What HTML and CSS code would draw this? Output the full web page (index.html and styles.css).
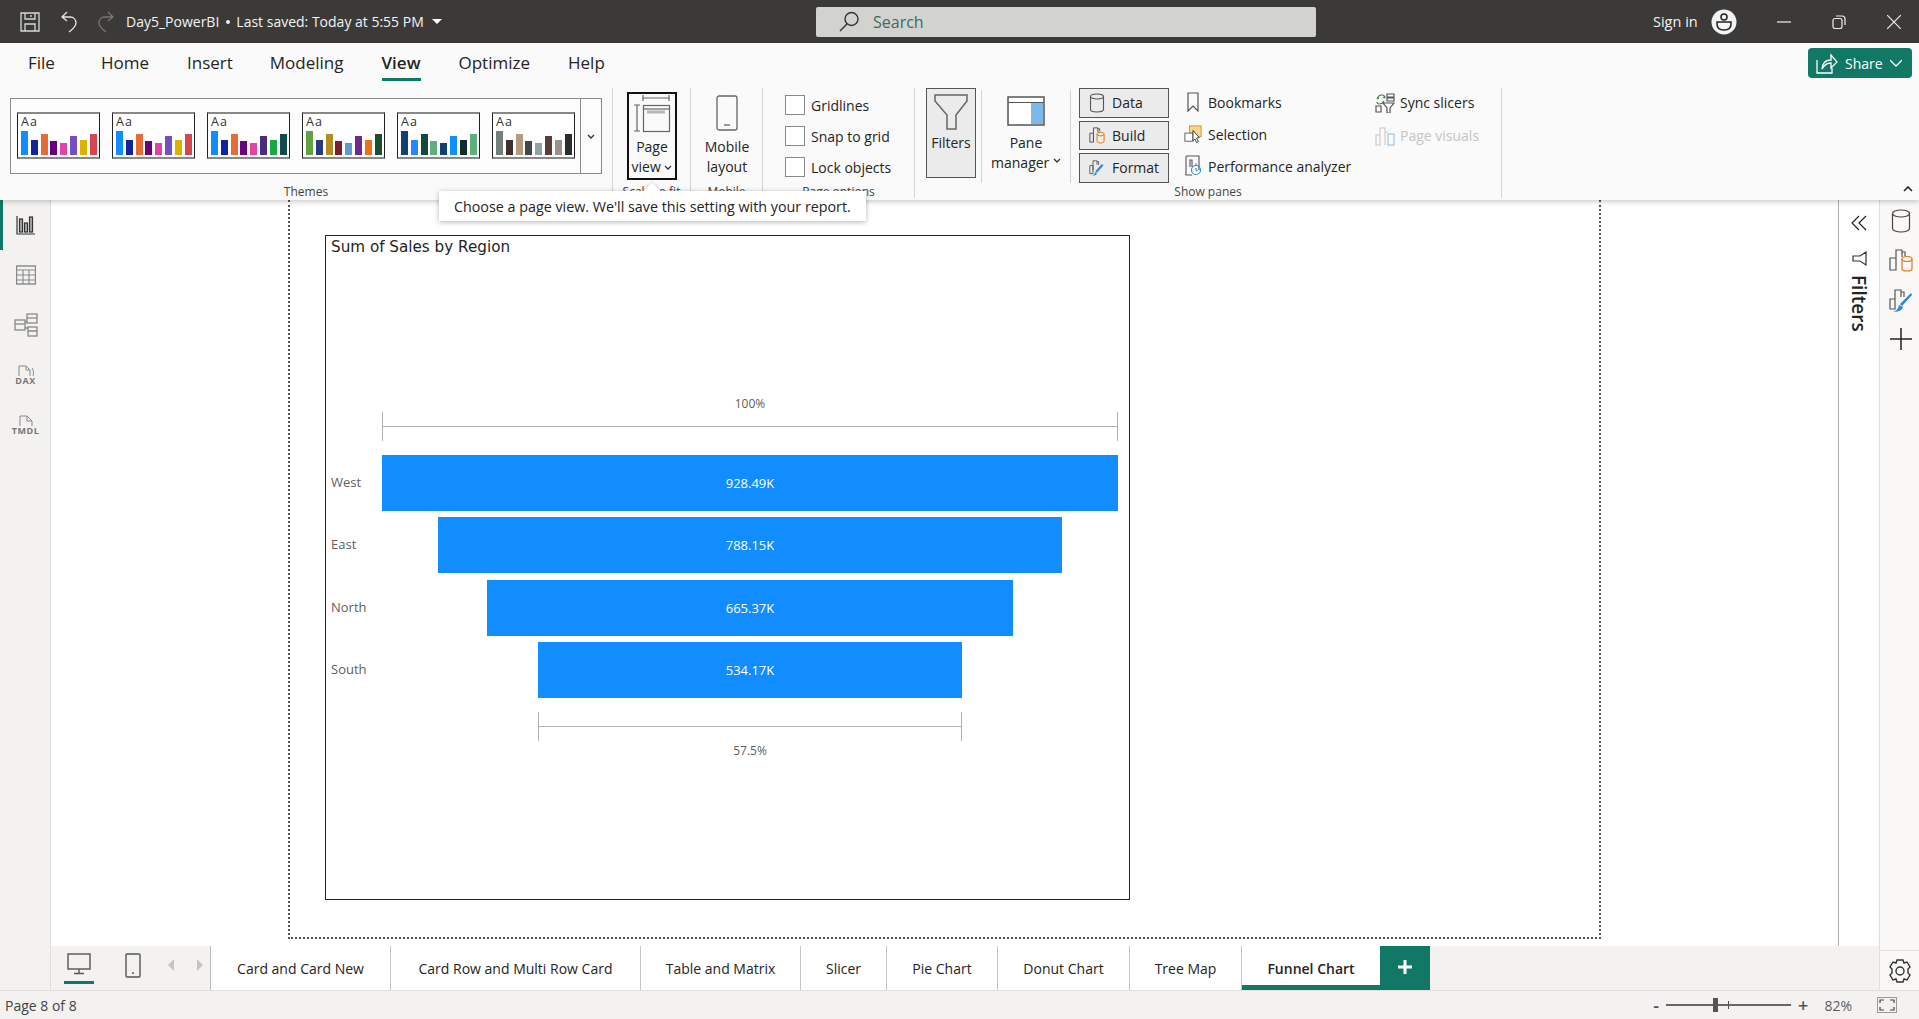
FILE: index.html
```html
<!DOCTYPE html>
<html lang="en">
<head>
    <meta charset="UTF-8">
    <meta name="viewport" content="width=device-width, initial-scale=1.0">
    <title>Day5_PowerBI</title>
    <link rel="stylesheet" href="styles.css">
</head>
<body>
    <header class="titlebar">
        <div class="quick">
            <svg class="save-icon" width="20" height="20" viewBox="0 0 20 20" fill="none" stroke="#d8d8d8" stroke-width="1.3"><path d="M1 1h18v18H1zM5 1v6h10V1M5 19v-7h10v7M11 3v2"/></svg>
            <svg class="undo-icon" width="18" height="22" viewBox="0 0 18 22" fill="none" stroke="#e6e6e6" stroke-width="1.3"><path d="M7 1 2 6l5 4M2 6h8c4 0 6 3 6 6 0 3-3 6-7 9"/></svg>
            <svg class="redo-icon" width="18" height="22" viewBox="0 0 18 22" fill="none" stroke="#777" stroke-width="1.3"><path d="m11 1 5 5-5 4M16 6H8c-4 0-6 3-6 6 0 3 3 6 7 9"/></svg>
            <span class="doc-name">Day5_PowerBI</span>
            <span class="doc-dot"></span>
            <span class="doc-saved">Last saved: Today at 5:55 PM</span>
            <span class="doc-caret"></span>
        </div>
        <div class="search">
            <svg width="22" height="22" viewBox="0 0 22 22" fill="none" stroke="#333" stroke-width="1.4"><circle cx="13.5" cy="8" r="6.5"/><path d="M9 13 2 20"/></svg>
            <span>Search</span>
        </div>
        <div class="account">
            <span class="sign-in">Sign in</span>
            <svg class="avatar" width="26" height="26" viewBox="0 0 26 26"><circle cx="13" cy="13" r="12.5" fill="#f4f4f4"/><circle cx="13" cy="8" r="3" fill="none" stroke="#222" stroke-width="1.5"/><path d="M6 13h14v2c0 4-3 6-7 6s-7-2-7-6z" fill="none" stroke="#222" stroke-width="1.5"/></svg>
            <div class="win-btns">
                <svg width="14" height="14" viewBox="0 0 14 14" stroke="#eee" stroke-width="1.2"><path d="M0 7h14"/></svg>
                <svg width="14" height="14" viewBox="0 0 14 14" fill="none" stroke="#eee" stroke-width="1.2"><rect x="1" y="3.500" width="9" height="10" rx="2"/><path d="M4 1h6c2 0 3 1 3 3v6"/></svg>
                <svg width="14" height="14" viewBox="0 0 14 14" stroke="#eee" stroke-width="1.2"><path d="m0 0 14 14M14 0 0 14"/></svg>
            </div>
        </div>
    </header>

    <section class="ribbon">
        <nav class="ribbon-tabs">
            <a class="rtab rtab-file">File</a>
            <a class="rtab rtab-home">Home</a>
            <a class="rtab rtab-insert">Insert</a>
            <a class="rtab rtab-modeling">Modeling</a>
            <a class="rtab rtab-view active">View</a>
            <a class="rtab rtab-optimize">Optimize</a>
            <a class="rtab rtab-help">Help</a>
            <button class="share">
                <svg width="22" height="22" viewBox="0 0 22 22" fill="none" stroke="#fff" stroke-width="1.3"><path d="M1 8v13h15v-5M6 17c0-5 3-9 9-9V3l6 7-6 6v-5c-4 0-7 2-9 6z"/></svg>
                <span>Share</span>
                <svg width="12" height="8" viewBox="0 0 12 8" fill="none" stroke="#fff" stroke-width="1.3"><path d="m0 1 6 6 6-6"/></svg>
            </button>
        </nav>

        <div class="ribbon-body">
            <div class="group group-themes">
                <div class="group-main">
                    <div class="gallery">
                        <div class="gallery-items">
                            <div class="theme"><span class="aa">Aa</span><div class="bars"><i style="background:#118dff"></i><i style="background:#12239e"></i><i style="background:#e66c37"></i><i style="background:#6b007b"></i><i style="background:#e044a7"></i><i style="background:#744ec2"></i><i style="background:#d9b300"></i><i style="background:#d64550"></i></div></div>
                            <div class="theme"><span class="aa">Aa</span><div class="bars"><i style="background:#118dff"></i><i style="background:#12239e"></i><i style="background:#e66c37"></i><i style="background:#6b007b"></i><i style="background:#e044a7"></i><i style="background:#744ec2"></i><i style="background:#d9b300"></i><i style="background:#d64550"></i></div></div>
                            <div class="theme"><span class="aa">Aa</span><div class="bars"><i style="background:#118dff"></i><i style="background:#12239e"></i><i style="background:#e66c37"></i><i style="background:#6b007b"></i><i style="background:#e044a7"></i><i style="background:#4b2d7f"></i><i style="background:#1aab40"></i><i style="background:#0f4c4a"></i></div></div>
                            <div class="theme"><span class="aa">Aa</span><div class="bars"><i style="background:#63a33f"></i><i style="background:#2b3a7b"></i><i style="background:#af8e26"></i><i style="background:#7a1f2b"></i><i style="background:#5e9bd1"></i><i style="background:#6b2a8c"></i><i style="background:#e8731a"></i><i style="background:#1c4d30"></i></div></div>
                            <div class="theme"><span class="aa">Aa</span><div class="bars"><i style="background:#134074"></i><i style="background:#2886ff"></i><i style="background:#134a3f"></i><i style="background:#5fae7b"></i><i style="background:#134074"></i><i style="background:#118dff"></i><i style="background:#0f2e2b"></i><i style="background:#5fae7b"></i></div></div>
                            <div class="theme"><span class="aa">Aa</span><div class="bars"><i style="background:#72807c"></i><i style="background:#3e2f2f"></i><i style="background:#b59a80"></i><i style="background:#40484a"></i><i style="background:#8fa3a3"></i><i style="background:#593e38"></i><i style="background:#9b938a"></i><i style="background:#2a2e2e"></i></div></div>
                        </div>
                        <div class="gallery-more"><svg width="8" height="5" viewBox="0 0 8 5" fill="none" stroke="#333" stroke-width="1.4"><path d="m1 1 3 3 3-3"/></svg></div>
                    </div>
                </div>
                <div class="group-label">Themes</div>
            </div>

            <div class="group group-scale">
                <div class="group-main">
                    <div class="big-btn page-view">
                        <svg width="40" height="40" viewBox="0 0 40 40" fill="none" stroke="#666" stroke-width="1.2"><path d="M11 1h26M11-2v6M37-2v6" transform="translate(0 2)"/><path d="M2 10h6M5 10v26M2 36h6"/><rect x="11.500" y="10.500" width="26" height="26"/><path d="M12 14h25"/><rect x="15" y="15.500" width="18" height="3" fill="#b5b5b5" stroke="none"/></svg>
                        <span>Page</span>
                        <span>view <svg class="chev" width="8" height="5" viewBox="0 0 8 5" fill="none" stroke="#333" stroke-width="1.3"><path d="m1 1 3 3 3-3"/></svg></span>
                    </div>
                </div>
                <div class="group-label">Scale to fit</div>
            </div>

            <div class="group group-mobile">
                <div class="group-main">
                    <div class="big-btn mobile-btn">
                        <svg width="22" height="36" viewBox="0 0 22 36" fill="none" stroke="#666" stroke-width="1.3"><rect x="1" y="1" width="20" height="34" rx="2"/><path d="M8 30h6"/></svg>
                        <span>Mobile</span>
                        <span>layout</span>
                    </div>
                </div>
                <div class="group-label">Mobile</div>
            </div>

            <div class="group group-options">
                <div class="group-main">
                    <div class="check-list">
                        <label class="check"><span class="box"></span>Gridlines</label>
                        <label class="check"><span class="box"></span>Snap to grid</label>
                        <label class="check"><span class="box"></span>Lock objects</label>
                    </div>
                </div>
                <div class="group-label">Page options</div>
            </div>

            <div class="group group-panes">
                <div class="group-main">
                    <div class="big-btn filters-btn">
                        <svg width="36" height="38" viewBox="0 0 36 38" fill="none" stroke="#666" stroke-width="1.5"><path d="M2 2h32v6L23 22v14h-9V22L2 8z"/></svg>
                        <span>Filters</span>
                    </div>
                    <div class="pane-sep"></div>
                    <div class="big-btn pane-btn">
                        <svg width="38" height="30" viewBox="0 0 38 30" fill="none"><rect x="1" y="1" width="36" height="28" fill="#fff" stroke="#555" stroke-width="1.500"/><rect x="24" y="7" width="12" height="21" fill="#7db8e8"/><path d="M1 6.500h36" stroke="#555" stroke-width="1.200"/></svg>
                        <span>Pane</span>
                        <span>manager <svg class="chev" width="8" height="5" viewBox="0 0 8 5" fill="none" stroke="#333" stroke-width="1.3"><path d="m1 1 3 3 3-3"/></svg></span>
                    </div>
                    <div class="pane-sep"></div>
                    <div class="pane-col pane-toggles">
                        <div class="toggle">
                            <svg width="16" height="20" viewBox="0 0 16 20" fill="none" stroke="#555" stroke-width="1.1"><ellipse cx="8" cy="3.500" rx="6.500" ry="2.500"/><path d="M1.500 3.500v13c0 1.500 3 2.500 6.500 2.500s6.500-1 6.500-2.500v-13"/></svg>
                            <span>Data</span>
                        </div>
                        <div class="toggle">
                            <svg width="18" height="20" viewBox="0 0 18 20" fill="none" stroke="#555" stroke-width="1.1"><path d="M1 8h4v10H1zM5 18V2h5v5M10 3h2v3"/><ellipse cx="13" cy="9" rx="4" ry="2" stroke="#e07b1a"/><path d="M9 9v8c0 1 2 2 4 2s4-1 4-2V9" stroke="#e07b1a"/></svg>
                            <span>Build</span>
                        </div>
                        <div class="toggle">
                            <svg width="20" height="22" viewBox="0 0 20 22" fill="none" stroke="#555" stroke-width="1.1"><path d="M1 8h4v10H1zM5 14V2h5v5M10 3h2v4"/><path d="m8 15 8-9 2 2-8 9z" fill="#2b88d8" stroke="none"/><path d="M4 20c2 0 3-1 4-4l2 2c-1 2-3 3-6 2z" fill="#2b88d8" stroke="none"/></svg>
                            <span>Format</span>
                        </div>
                    </div>
                    <div class="pane-col pane-links">
                        <div class="link-row">
                            <svg width="18" height="20" viewBox="0 0 18 20" fill="none" stroke="#555" stroke-width="1.2"><path d="M4 1h10v18l-5-5-5 5z"/></svg>
                            <span>Bookmarks</span>
                        </div>
                        <div class="link-row">
                            <svg width="18" height="20" viewBox="0 0 20 20" fill="none"><rect x="6" y="1" width="13" height="12" fill="#f7d58e" stroke="#d88b2b"/><rect x="1" y="9" width="9" height="9" fill="#fff" stroke="#555"/><path d="m10 6 7 8-3 .5 2 4-2 1-2-4-2 2z" fill="#fff" stroke="#333"/></svg>
                            <span>Selection</span>
                        </div>
                        <div class="link-row">
                            <svg width="18" height="22" viewBox="0 0 18 22" fill="none" stroke="#555" stroke-width="1.1"><path d="M2 1h13v14M2 1v19h6M6 12V5h2v7"/><circle cx="12" cy="15" r="4.500" stroke="#2b88d8"/><path d="M12 13v2l1.500 1M11 9h2" stroke="#2b88d8"/></svg>
                            <span>Performance analyzer</span>
                        </div>
                    </div>
                    <div class="pane-col pane-extra">
                        <div class="link-row">
                            <svg width="20" height="20" viewBox="0 0 20 20" fill="none" stroke-width="1.2"><path d="M2 6c1-3 3-4 5-4s3 1 3 3M10 5l-2-1M2 6l2-1M9 8c-1 2-3 3-5 3-1 0-2-1-2-2" stroke="#2e8b3f"/><path d="M12 1h7v3h-7zM12 5h7v3h-7zM1 13h5v6H1zM8 10h11l-4 5v5h-3v-5z" stroke="#555"/></svg>
                            <span>Sync slicers</span>
                        </div>
                        <div class="link-row disabled">
                            <svg width="20" height="20" viewBox="0 0 20 20" fill="none" stroke="#c8c8c8" stroke-width="1.1"><path d="M1 9h4v10H1zM5 19V2h5v17M10 6h3"/><rect x="13" y="8" width="6" height="11" stroke="#8fc1ea"/></svg>
                            <span>Page visuals</span>
                        </div>
                    </div>
                </div>
                <div class="group-label">Show panes</div>
            </div>
        </div>

        <svg class="ribbon-collapse" width="10" height="6" viewBox="0 0 10 6" fill="none" stroke="#222" stroke-width="1.6"><path d="m1 5 4-4 4 4"/></svg>
        <div class="tooltip">Choose a page view. We'll save this setting with your report.</div>
    </section>

    <main class="workspace">
        <aside class="sidebar">
            <div class="side-item active">
                <svg width="20" height="20" viewBox="0 0 20 20" fill="none" stroke="#333" stroke-width="1.2"><path d="M1 1v18h18"/><rect x="3.500" y="4" width="3" height="13" fill="#aaa"/><rect x="8.500" y="8" width="3" height="9" fill="#aaa"/><rect x="13.500" y="2" width="3" height="15" fill="#aaa"/></svg>
            </div>
            <div class="side-item">
                <svg width="20" height="20" viewBox="0 0 20 20" fill="none" stroke="#888" stroke-width="1.1"><rect x=".5" y="1" width="19" height="18" stroke-width="1.4"/><path d="M.5 5h19M.5 10h19M.5 15h19M7 5v14M13 5v14"/></svg>
            </div>
            <div class="side-item">
                <svg width="24" height="24" viewBox="0 0 24 24" fill="none" stroke="#888" stroke-width="1.3"><rect x="1" y="7" width="10" height="10"/><path d="M1 11h10"/><rect x="13" y="1" width="10" height="9"/><path d="M13 5h10"/><rect x="14" y="14" width="9" height="9"/><path d="M14 18h9M11 9h2M11 15h3"/></svg>
            </div>
            <div class="side-item file-item">
                <svg width="20" height="16" viewBox="0 0 20 16" fill="none" stroke="#888" stroke-width="1"><path d="M3 12V1h7l4 4v9M10 1v4h4M16 3c2 3 2 7 0 11"/></svg>
                <span>DAX</span>
            </div>
            <div class="side-item file-item">
                <svg width="20" height="16" viewBox="0 0 20 16" fill="none" stroke="#888" stroke-width="1"><path d="M4 12V1h7l5 5v6M11 1v5h5"/></svg>
                <span>TMDL</span>
            </div>
        </aside>

        <div class="center">
            <div class="canvas-row">
                <div class="canvas">
                    <div class="page">
                        <div class="visual">
                            <div class="visual-title">Sum of Sales by Region</div>
                            <div class="funnel">
                                <div class="pct-label">100%</div>
                                <div class="bracket-row"><div class="bracket" style="width:100%"></div></div>
                                <div class="funnel-rows">
                                    <div class="funnel-row"><span class="cat">West</span><div class="track"><div class="bar" style="width:100%">928.49K</div></div></div>
                                    <div class="funnel-row"><span class="cat">East</span><div class="track"><div class="bar" style="width:84.8%">788.15K</div></div></div>
                                    <div class="funnel-row"><span class="cat">North</span><div class="track"><div class="bar" style="width:71.6%">665.37K</div></div></div>
                                    <div class="funnel-row"><span class="cat">South</span><div class="track"><div class="bar" style="width:57.6%">534.17K</div></div></div>
                                </div>
                                <div class="bracket-row bottom"><div class="bracket" style="width:57.6%"></div></div>
                                <div class="pct-label">57.5%</div>
                            </div>
                        </div>
                    </div>
                </div>
                <div class="filters-pane">
                    <svg class="pane-chevrons" width="16" height="16" viewBox="0 0 16 16" fill="none" stroke="#222" stroke-width="1.2"><path d="M8 1 1 8l7 7M15 1 8 8l7 7"/></svg>
                    <svg class="pane-funnel" width="15" height="15" viewBox="0 0 15 15" fill="none" stroke="#333" stroke-width="1.2"><path d="M14 1v13l-6-4H1V5h7z"/></svg>
                    <span class="filters-text">Filters</span>
                </div>
            </div>
            <div class="tabstrip">
                <div class="devices">
                    <div class="device active">
                        <svg width="24" height="22" viewBox="0 0 24 22" fill="none" stroke="#555" stroke-width="1.4"><rect x="1" y="1" width="22" height="15"/><path d="M12 16v4M7 20.500h10"/></svg>
                    </div>
                    <div class="device">
                        <svg width="16" height="25" viewBox="0 0 16 25" fill="none" stroke="#555" stroke-width="1.4"><rect x="1" y="1" width="14" height="23" rx="1"/><path d="M7 20h2"/></svg>
                    </div>
                    <svg class="arrow" width="7" height="12" viewBox="0 0 7 12" fill="#c4c4c4"><path d="M6 0v12L0 6z"/></svg>
                    <svg class="arrow" width="7" height="12" viewBox="0 0 7 12" fill="#c4c4c4"><path d="M1 0v12l6-6z"/></svg>
                </div>
                <div class="tab tab-card">Card and Card New</div>
                <div class="tab tab-multi">Card Row and Multi Row Card</div>
                <div class="tab tab-table">Table and Matrix</div>
                <div class="tab tab-slicer">Slicer</div>
                <div class="tab tab-pie">Pie Chart</div>
                <div class="tab tab-donut">Donut Chart</div>
                <div class="tab tab-tree">Tree Map</div>
                <div class="tab tab-funnel active">Funnel Chart</div>
                <div class="tab-add">
                    <svg width="16" height="16" viewBox="0 0 16 16" stroke="#fff" stroke-width="3"><path d="M8 1v14M1 8h14"/></svg>
                </div>
            </div>
        </div>

        <aside class="rail">
            <div class="rail-top">
                <svg width="20" height="24" viewBox="0 0 20 24" fill="none" stroke="#444" stroke-width="1.2"><ellipse cx="10" cy="4.500" rx="8.500" ry="3.500"/><path d="M1.500 4.500v15c0 2 4 3.500 8.500 3.500s8.500-1.500 8.500-3.500v-15"/></svg>
                <svg width="24" height="24" viewBox="0 0 24 24" fill="none" stroke="#555" stroke-width="1.2"><path d="M1 10h6v12H1zM7 22V2h6v7M13 4h3v4"/><ellipse cx="18" cy="11" rx="5" ry="2.500" stroke="#e07b1a"/><path d="M13 11v10c0 1 2 2 5 2s5-1 5-2V11" stroke="#e07b1a"/></svg>
                <svg width="24" height="26" viewBox="0 0 24 26" fill="none" stroke="#555" stroke-width="1.2"><path d="M1 12h5v10H1zM6 17V3h6v7M12 5h3v5"/><path d="m11 17 11-11 1 2-10 11z" fill="#2b88d8" stroke="none"/><path d="M4 24c3 0 5-1 6-6l4 2c-1 3-5 6-10 4z" fill="#2b88d8" stroke="none"/></svg>
                <svg width="22" height="22" viewBox="0 0 22 22" stroke="#222" stroke-width="1.5"><path d="M11 0v22M0 11h22"/></svg>
            </div>
            <div class="rail-bottom">
                <svg width="26" height="26" viewBox="0 0 26 26" fill="none" stroke="#333" stroke-width="1.400"><circle cx="13" cy="13" r="4"/><path d="M10 2h6l1 3 3-1 3 5-2 2v4l2 2-3 5-3-1-1 3h-6l-1-3-3 1-3-5 2-2v-4L3 9l3-5 3 1z"/></svg>
            </div>
        </aside>
    </main>

    <footer class="statusbar">
        <span class="page-count">Page 8 of 8</span>
        <div class="zoom">
            <span class="zoom-sign minus">-</span>
            <div class="zoom-track"><span class="zoom-thumb"></span><span class="zoom-tick"></span></div>
            <span class="zoom-sign plus">+</span>
            <span class="zoom-value">82%</span>
            <svg class="fit-icon" width="20" height="16" viewBox="0 0 20 16" fill="none"><rect x=".5" y=".5" width="19" height="15" stroke="#999"/><path d="M3 6V3h4M13 3h4v3M17 10v3h-4M7 13H3v-3" stroke="#444" stroke-width="1.200"/></svg>
        </div>
    </footer>
</body>
</html>
```

FILE: styles.css
```css
* {
    box-sizing: border-box;
}

html,
body {
    margin: 0;
    height: 100%;
}

body {
    display: flex;
    flex-direction: column;
    height: 1019px;
    overflow: hidden;
    font-family: "Open Sans", "Noto Sans", sans-serif;
    font-size: 14px;
    color: #252423;
    background: #fff;
}

svg {
    display: block;
    flex: none;
}

/* title bar */
.titlebar {
    display: flex;
    align-items: center;
    height: 43px;
    flex: none;
    padding-left: 20px;
    background: #3b3a39;
    color: #f3f3f3;
}

.quick {
    display: flex;
    align-items: center;
    width: 796px;
}

.undo-icon {
    margin-left: 20px;
}

.redo-icon {
    margin-left: 19px;
}

.doc-name {
    margin-left: 11px;
}

.doc-dot {
    width: 4px;
    height: 4px;
    margin: 0 6px 0 7px;
    border-radius: 50%;
    background: #eee;
}

.doc-caret {
    margin-left: 8px;
    border-left: 5px solid transparent;
    border-right: 5px solid transparent;
    border-top: 5px solid #fff;
}

.search {
    display: flex;
    align-items: center;
    gap: 13px;
    width: 500px;
    height: 30px;
    padding-left: 22px;
    border-radius: 2px;
    background: #d2d2cf;
    color: #3f6a62;
    font-size: 16px;
}

.account {
    display: flex;
    align-items: center;
    margin-left: 337px;
}

.sign-in {
    font-size: 14.5px;
}

.avatar {
    margin-left: 13px;
}

.win-btns {
    display: flex;
    gap: 41px;
    margin-left: 40px;
}

/* ribbon */
.ribbon {
    position: relative;
    z-index: 3;
    flex: none;
    height: 157px;
    background: #fafafa;
    box-shadow: 0 2px 5px rgba(0, 0, 0, 0.2);
}

.ribbon-tabs {
    display: flex;
    height: 45px;
    padding-right: 7px;
}

.rtab {
    height: 38px;
    padding-top: 8px;
    font-size: 17px;
}

.rtab-file {
    margin-left: 28px;
}

.rtab-home {
    margin-left: 46px;
}

.rtab-insert {
    margin-left: 38px;
}

.rtab-modeling {
    margin-left: 37px;
}

.rtab-view {
    margin-left: 38px;
}

.rtab-optimize {
    margin-left: 38px;
}

.rtab-help {
    margin-left: 38px;
}

.rtab.active {
    font-weight: 600;
    border-bottom: 3px solid #117865;
}

.share {
    display: flex;
    align-items: center;
    gap: 7px;
    margin: 5px 0 0 auto;
    width: 104px;
    height: 30px;
    padding: 0 0 0 8px;
    border: 0;
    border-radius: 4px;
    background: #117865;
    color: #fff;
    font: inherit;
}

.ribbon-body {
    display: flex;
    height: 110px;
}

.group {
    display: flex;
    flex-direction: column;
    flex: none;
    border-right: 1px solid #d4d4d4;
}

.group-main {
    display: flex;
    flex: 1;
    min-height: 0;
}

.group-label {
    height: 16px;
    margin-bottom: -2px;
    font-size: 12px;
    line-height: 16px;
    text-align: center;
    color: #444;
}

.group-themes {
    width: 613px;
    padding: 10px 10px 0;
}

.group-scale {
    width: 78px;
}

.group-mobile {
    width: 72px;
}

.group-options {
    width: 152px;
}

.group-panes {
    width: 587px;
}

/* theme gallery */
.gallery {
    display: flex;
    width: 592px;
    height: 76px;
    border: 1px solid #8a8a8a;
    background: #fcfcfc;
}

.gallery-items {
    display: flex;
    gap: 12px;
    flex: 1;
    padding: 13px 0 0 6px;
    border-right: 1px solid #8a8a8a;
}

.gallery-more {
    display: flex;
    align-items: center;
    justify-content: center;
    width: 20px;
}

.theme {
    position: relative;
    display: flex;
    flex-direction: column;
    width: 83px;
    height: 47px;
    padding: 0 3px;
    border: 1px solid #222;
    border-top: 2px solid #888;
    border-bottom: 2px solid #888;
    background: #fff;
}

.aa {
    font-size: 12.5px;
    line-height: 15px;
    letter-spacing: 1.2px;
    height: 13px;
    color: #333;
}

.bars {
    position: absolute;
    left: 3px;
    bottom: 2px;
    display: flex;
    align-items: flex-end;
    gap: 2.800px;
    height: 25px;
}

.bars i {
    display: block;
    width: 7px;
}

.bars i:nth-child(1) { height: 24px; }
.bars i:nth-child(2) { height: 15px; }
.bars i:nth-child(3) { height: 21px; }
.bars i:nth-child(4) { height: 14px; }
.bars i:nth-child(5) { height: 12px; }
.bars i:nth-child(6) { height: 19px; }
.bars i:nth-child(7) { height: 15px; }
.bars i:nth-child(8) { height: 21px; }

/* ribbon buttons */
.big-btn {
    display: flex;
    flex-direction: column;
    align-items: center;
    line-height: 20px;
}

.chev {
    display: inline-block;
    vertical-align: middle;
}

.page-view {
    width: 50px;
    height: 88px;
    margin: 4px 0 0 14px;
    padding-top: 1px;
    border: 2.500px solid #111;
}

.page-view svg:first-child {
    margin-bottom: 2px;
}

.mobile-btn {
    width: 72px;
    margin-left: 1px;
    padding-top: 7px;
}

.mobile-btn svg:first-child {
    margin-bottom: 6px;
}

.check-list {
    display: flex;
    flex-direction: column;
    gap: 11px;
    padding: 7px 0 0 22px;
}

.check {
    display: flex;
    align-items: center;
    gap: 6px;
}

.box {
    width: 20px;
    height: 20px;
    border: 1px solid #8a8a8a;
    background: #fff;
}

.filters-btn {
    width: 50px;
    height: 90px;
    margin-left: 11px;
    padding-top: 4px;
    border: 1px solid #555;
    background: #ebebeb;
}

.filters-btn svg:first-child {
    margin-bottom: 2px;
}

.pane-sep {
    width: 1px;
    height: 93px;
    margin-top: 2px;
    background: #d4d4d4;
}

.filters-btn + .pane-sep {
    margin-left: 5px;
}

.pane-btn {
    width: 88px;
    padding-top: 8px;
}

.pane-btn svg:first-child {
    margin-bottom: 7px;
}

.pane-col {
    display: flex;
    flex-direction: column;
}

.pane-toggles {
    gap: 3px;
    width: 90px;
    margin-left: 8px;
}

.toggle {
    display: flex;
    align-items: center;
    gap: 7px;
    height: 29.500px;
    padding-left: 9px;
    border: 1px solid #555;
    background: #ebebeb;
}

.toggle svg {
    width: 16px;
}

.pane-links {
    width: 189px;
    margin-left: 15px;
}

.pane-extra {
    width: 118px;
    margin-left: 2px;
}

.link-row {
    display: flex;
    align-items: center;
    gap: 5px;
    height: 29px;
    margin-bottom: 4px;
}

.link-row.disabled {
    color: #c4c4c4;
}

.pane-links .link-row {
    gap: 6px;
}

.ribbon-collapse {
    position: absolute;
    right: 6px;
    top: 143px;
}

.tooltip {
    position: absolute;
    left: 439px;
    top: 148px;
    width: 427px;
    height: 30px;
    padding-left: 15px;
    font-size: 14.3px;
    line-height: 32px;
    background: #fff;
    box-shadow: 0 1px 5px rgba(0, 0, 0, 0.3);
    white-space: nowrap;
}

.tooltip::before {
    content: "";
    position: absolute;
    left: 207px;
    top: -6px;
    width: 12px;
    height: 12px;
    background: #fff;
    transform: rotate(45deg);
    box-shadow: -1px -1px 2px rgba(0, 0, 0, 0.1);
}

/* workspace */
.workspace {
    display: flex;
    flex: 1;
    min-height: 0;
}

.sidebar {
    position: relative;
    width: 51px;
    flex: none;
    background: #f3f2f1;
    border-right: 1px solid #e1dfdd;
}

.side-item {
    display: flex;
    flex-direction: column;
    align-items: center;
    justify-content: center;
    height: 50px;
    border-left: 3px solid transparent;
    padding-right: 2px;
}

.side-item.active {
    border-left-color: #117865;
}

.file-item span {
    margin-top: -5px;
    font-size: 9px;
    font-weight: 700;
    line-height: 9px;
    letter-spacing: 0.5px;
    color: #777;
    background: #f3f2f1;
}

.center {
    display: flex;
    flex-direction: column;
    flex: 1;
    min-width: 0;
}

.canvas-row {
    display: flex;
    flex: 1;
    min-height: 0;
}

.canvas {
    flex: 1;
    padding: 0 0 7px 237px;
    background: #fff;
    overflow: hidden;
}

.page {
    width: 1313px;
    height: 100%;
    padding: 35px 0 0 35px;
    border: 2px dotted #555;
    border-top: 0;
}

.visual {
    width: 805px;
    height: 665px;
    border: 1px solid #252423;
    background: #fff;
}

.visual-title {
    height: 22px;
    padding: 1px 0 0 5px;
    font-family: "DejaVu Sans", sans-serif;
    font-size: 15.2px;
    line-height: 20px;
    color: #252423;
}

.funnel {
    display: flex;
    flex-direction: column;
    margin-top: 138px;
    padding-right: 11px;
    color: #605e5c;
    font-size: 12px;
}

.pct-label {
    height: 16px;
    margin-left: 56px;
    line-height: 16px;
    text-align: center;
}

.bracket-row {
    display: flex;
    justify-content: center;
    height: 29px;
    margin: 0 0 14px 56px;
}

.bracket-row.bottom {
    margin: 14px 0 2px 56px;
}

.bracket {
    position: relative;
    height: 29px;
    border-left: 1px solid #b3b0ad;
    border-right: 1px solid #b3b0ad;
}

.bracket::after {
    content: "";
    position: absolute;
    left: 0;
    right: 0;
    top: 14px;
    border-top: 1px solid #b3b0ad;
}

.funnel-rows {
    display: flex;
    flex-direction: column;
    gap: 6.300px;
}

.funnel-row {
    display: flex;
    align-items: stretch;
    height: 56px;
}

.cat {
    width: 56px;
    flex: none;
    padding: 18px 0 0 5px;
    font-size: 13px;
    line-height: 18px;
}

.track {
    display: flex;
    justify-content: center;
    flex: 1;
}

.bar {
    display: flex;
    align-items: center;
    justify-content: center;
    background: #118dff;
    color: #fff;
    font-size: 13px;
}

/* filters pane and right rail */
.filters-pane {
    display: flex;
    flex-direction: column;
    align-items: center;
    width: 41px;
    flex: none;
    padding-top: 15px;
    border-left: 1px solid #b0b0b0;
    background: #fff;
}

.pane-funnel {
    margin-top: 20px;
}

.filters-text {
    margin-top: 9px;
    writing-mode: vertical-rl;
    font-size: 19px;
    font-weight: 600;
}

.rail {
    display: flex;
    flex-direction: column;
    justify-content: space-between;
    width: 40px;
    flex: none;
    border-left: 1px solid #e1dfdd;
    background: #f9f8f7;
}

.rail-top {
    display: flex;
    flex-direction: column;
    align-items: center;
    gap: 15px;
    padding: 9px 0 0 2px;
}

.rail-bottom {
    display: flex;
    justify-content: center;
    align-items: center;
    height: 40px;
    border-top: 1px solid #e1dfdd;
}

/* page tabs */
.tabstrip {
    display: flex;
    align-items: stretch;
    flex: none;
    height: 44px;
    background: #f3f2f1;
}

.devices {
    display: flex;
    align-items: center;
    width: 160px;
    flex: none;
    padding-left: 13px;
    border-right: 1px solid #b8b8b8;
}

.device {
    display: flex;
    align-items: center;
    justify-content: center;
    height: 100%;
    width: 30px;
    padding-bottom: 8px;
}

.device:nth-child(2) {
    margin-left: 31px;
    width: 16px;
    padding-bottom: 6px;
}

.device.active {
    position: relative;
}

.device.active::after {
    content: "";
    position: absolute;
    left: 0;
    right: 0;
    bottom: 6px;
    height: 3px;
    background: #117865;
}

.arrow {
    margin-left: 27px;
    margin-bottom: 6px;
}

.arrow + .arrow {
    margin-left: 21px;
}

.tab {
    display: flex;
    align-items: center;
    justify-content: center;
    border-right: 1px solid #c8c6c4;
    background: #fff;
    white-space: nowrap;
}

.tab-card { width: 180px; }
.tab-multi { width: 250px; }
.tab-table { width: 160px; }
.tab-slicer { width: 86px; }
.tab-pie { width: 111px; }
.tab-donut { width: 132px; }
.tab-tree { width: 112px; }
.tab-funnel { width: 138px; }

.tab.active {
    font-weight: 600;
    border-right: 0;
    border-bottom: 5px solid #117865;
    padding-top: 5px;
}

.tab-add {
    display: flex;
    align-items: center;
    justify-content: center;
    width: 50px;
    padding-bottom: 2px;
    background: #117865;
}

/* status bar */
.statusbar {
    display: flex;
    align-items: center;
    justify-content: space-between;
    flex: none;
    height: 29px;
    padding: 0 22px 0 5px;
    background: #f3f2f1;
    border-top: 1px solid #e1dfdd;
    color: #444;
}

.zoom {
    display: flex;
    align-items: center;
}

.zoom-sign {
    font-size: 18px;
    font-weight: 600;
    color: #555;
}

.zoom-track {
    position: relative;
    width: 125px;
    height: 2px;
    margin: 0 7px;
    background: #666;
}

.zoom-thumb {
    position: absolute;
    left: 47px;
    top: -6px;
    width: 5px;
    height: 14px;
    background: #555;
}

.zoom-tick {
    position: absolute;
    left: 62px;
    top: -3px;
    width: 1px;
    height: 8px;
    background: #555;
}

.zoom-value {
    margin-left: 16px;
    color: #605e5c;
}

.fit-icon {
    margin-left: 25px;
}
```
